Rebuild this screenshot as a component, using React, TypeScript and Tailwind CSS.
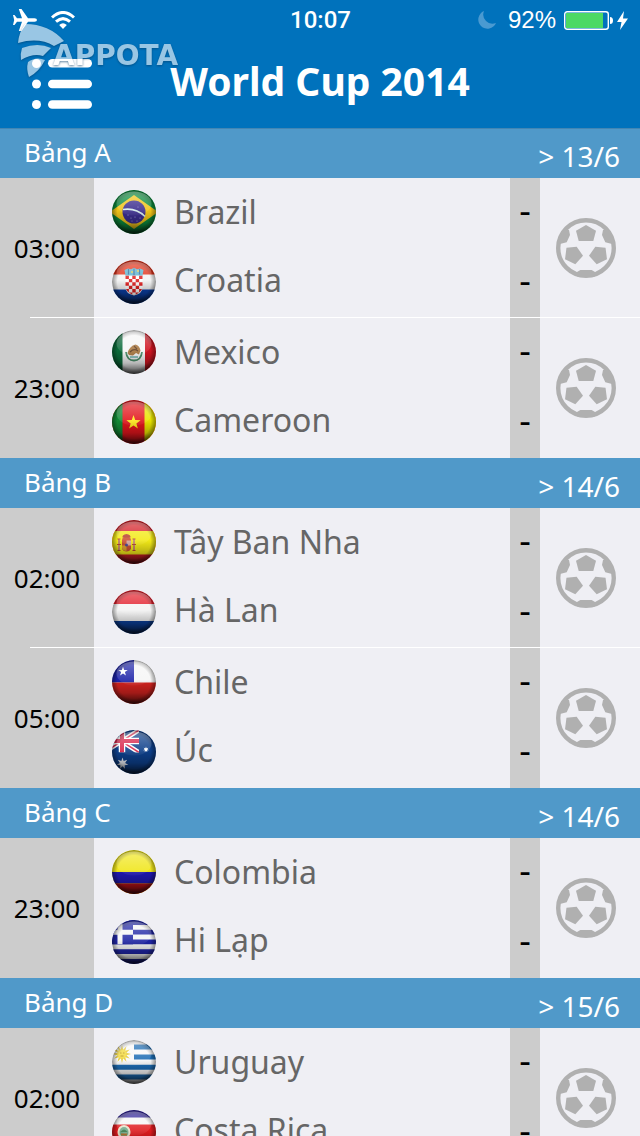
import type { ReactNode } from 'react'

interface Team {
  name: string
  flag: ReactNode
}

interface Match {
  time: string
  teams: Team[]
}

interface Group {
  name: string
  date: string
  matches: Match[]
}

function starPoints(cx: number, cy: number, outer: number, inner: number, tips = 5) {
  return Array.from({ length: tips * 2 }, (_, i) => {
    const r = i % 2 ? inner : outer
    const angle = (Math.PI * i) / tips - Math.PI / 2
    return `${(cx + r * Math.cos(angle)).toFixed(2)},${(cy + r * Math.sin(angle)).toFixed(2)}`
  }).join(' ')
}

const brazil = (
  <>
    <rect width="44" height="44" fill="#0c8a3c" />
    <path d="M22 5 46 22 22 39 -2 22Z" fill="#f0c419" />
    <circle cx="22" cy="22" r="11.5" fill="#3b2d8e" />
    <path d="M11 19.5q13-2 22 7" fill="none" stroke="#d5ecec" strokeWidth="1.6" />
    <g fill="#a9a4dc">
      <circle cx="16" cy="25" r=".6" />
      <circle cx="19" cy="28" r=".6" />
      <circle cx="23" cy="27" r=".6" />
      <circle cx="25" cy="31" r=".6" />
      <circle cx="20" cy="31" r=".5" />
      <circle cx="28" cy="28" r=".6" />
      <circle cx="26" cy="17" r=".5" />
    </g>
  </>
)

const croatia = (
  <>
    <rect width="44" height="44" fill="#f4f4f4" />
    <rect width="44" height="14.5" fill="#e2331b" />
    <rect y="29.5" width="44" height="15" fill="#0a3fa5" />
    <path d="M13.5 15.5h17v12q0 6-8.500 8-8.500-2-8.500-8Z" fill="#fff" />
    <path
      d="M13.500 15.500h3.400v3.400h-3.400zM20.300 15.500h3.400v3.400h-3.400zM27.100 15.500h3.400v3.400h-3.400zM16.900 18.900h3.400v3.400h-3.400zM23.700 18.900h3.400v3.400h-3.400zM13.500 22.300h3.400v3.400h-3.400zM20.300 22.300h3.400v3.400h-3.400zM27.100 22.300h3.400v3.400h-3.400zM16.900 25.700h3.400v3.400h-3.400zM23.700 25.700h3.400v3.400h-3.400zM14 29.100h2.900v3.300q-2.300-1.300-2.900-3.300zM20.300 29.100h3.400v3.400h-3.400zM27.100 29.100h2.900q-.6 2-2.900 3.300zM16.900 32.500h3.400v2.200zM23.700 32.500h3.400l-3.400 2.200z"
      fill="#e02020"
    />
    <path d="m12.500 10 3.500-1.500 3 .8 3-1.500 3 1.500 3-.8 3.500 1.500-1 5.500h-17Z" fill="#5fb3cf" />
    <path d="M16.500 9v5.500M22 8.500V15M27.500 9v5.500" stroke="#2f6c9c" strokeWidth="1.2" />
    <path d="M19 12h2M25 11h2" stroke="#e8cf4a" strokeWidth="1.5" />
  </>
)

const mexico = (
  <>
    <rect width="44" height="44" fill="#f6f6f6" />
    <rect width="10.5" height="44" fill="#0b6b3a" />
    <rect x="33" width="11" height="44" fill="#cf1420" />
    <path d="M14 22q1 8.500 8 8.500t8-8.500" fill="none" stroke="#4b8f6a" strokeWidth="1.8" />
    <path d="M15.500 23q2-7 8-8.500 4 1 5 6l-1.500 4-3-1.500-3 2.500-4-.5Z" fill="#a9773e" />
    <path d="M18 22q4-4 8-1M22 16l3 3" fill="none" stroke="#5e3c1e" strokeWidth="1.2" />
    <path d="M18 27h8" stroke="#6fb3b0" strokeWidth="1.5" />
  </>
)

const cameroon = (
  <>
    <rect width="44" height="44" fill="#e2151c" />
    <rect width="10.5" height="44" fill="#128a35" />
    <rect x="32.5" width="12" height="44" fill="#e8e400" />
    <polygon points={starPoints(21.5, 22.5, 7.5, 3)} fill="#ffea1a" />
  </>
)

const spain = (
  <>
    <rect width="44" height="44" fill="#d41f26" />
    <rect y="11" width="44" height="23.5" fill="#f3ea18" />
    <path d="M10 20.500q0-4 4.500-4t4.500 4v8q-1 3-4.500 3t-4.500-3Z" fill="#cf5334" />
    <path d="M14.500 20.500H19v5h-4.500z" fill="#d8a6a0" />
    <path d="M10 25.500h4.500V31q-4-.5-4.500-3Z" fill="#e0a232" />
    <circle cx="14.5" cy="25" r="1.5" fill="#4a4a9a" />
    <path d="M10.500 17.500q-.5-3 4-3.500 4.500.5 4 3.500Z" fill="#b8402c" />
    <path d="M7 19v11M22 19v11" stroke="#c78a6c" strokeWidth="2" />
    <path d="M5.500 30.500h3M20.500 30.500h3M5.500 19h3M20.500 19h3M5 24.500h4M20 24.500h4" stroke="#b5472f" strokeWidth="1" />
  </>
)

const netherlands = (
  <>
    <rect width="44" height="44" fill="#f4f4f4" />
    <rect width="44" height="14" fill="#e3202c" />
    <rect y="31" width="44" height="13" fill="#0b3f98" />
  </>
)

const chile = (
  <>
    <rect width="44" height="44" fill="#f6f6f6" />
    <rect width="22" height="22.5" fill="#1c22a8" />
    <rect y="22.5" width="44" height="22" fill="#d6231f" />
    <polygon points={starPoints(11, 11.5, 5, 2)} fill="#fff" />
  </>
)

const australia = (
  <>
    <rect width="44" height="44" fill="#0d3f8a" />
    <svg width="27" height="22.5" viewBox="0 0 27 22.5">
      <path d="M-8 0 27 22.500M27 0-8 22.500" stroke="#fff" strokeWidth="4.5" />
      <path d="M-8 0 27 22.500M27 0-8 22.500" stroke="#d8254a" strokeWidth="1.5" />
      <path d="M10 0v22.500M0 11h27" stroke="#fff" strokeWidth="6.5" />
      <path d="M10 0v22.500M0 11h27" stroke="#d8254a" strokeWidth="4" />
    </svg>
    <polygon points={starPoints(10.5, 33.5, 6, 2.7, 7)} fill="#e4e8ef" />
    <polygon points={starPoints(34, 19.5, 3, 1.3, 7)} fill="#fff" />
  </>
)

const colombia = (
  <>
    <rect width="44" height="44" fill="#f0e61c" />
    <rect y="22" width="44" height="11.5" fill="#2018b4" />
    <rect y="33.5" width="44" height="11" fill="#c01218" />
  </>
)

const greece = (
  <>
    <rect width="44" height="44" fill="#f6f6f6" />
    <path d="M0 2.500h44M0 12.200h44M0 21.900h44M0 31.600h44M0 41.500h44" stroke="#1f25a5" strokeWidth="4.8" />
    <rect width="21" height="24.3" fill="#1f25a5" />
    <path d="M8 0v24.300M0 12.200h21" stroke="#f6f6f6" strokeWidth="5" />
  </>
)

const uruguay = (
  <>
    <rect width="44" height="44" fill="#f8f8f8" />
    <path d="M22 7h22M22 17h22M0 27.200h44M0 37h44" stroke="#1c6cb4" strokeWidth="5" />
    <polygon points={starPoints(10, 14, 9, 4.5, 12)} fill="#e6c92a" />
    <circle cx="10" cy="14" r="4.5" fill="#f2d93a" />
    <path d="M8 13h1.500M11 13h1.500M8.500 16h3" stroke="#b8951c" />
  </>
)

const costaRica = (
  <>
    <rect width="44" height="44" fill="#f6f6f6" />
    <rect width="44" height="7.5" fill="#2c1f98" />
    <rect y="14.5" width="44" height="15" fill="#e01b1f" />
    <rect y="36.5" width="44" height="8" fill="#2c1f98" />
    <ellipse cx="12" cy="22" rx="6.5" ry="7" fill="#e6e2c8" />
    <ellipse cx="12" cy="22" rx="4.5" ry="5" fill="#6ea98a" />
    <path d="M8.500 22q3.500-5 7 0Z" fill="#397a4a" />
    <path d="M9 24.500h6" stroke="#b3732f" strokeWidth="2" />
  </>
)

const GROUPS: Group[] = [
  {
    name: 'Bảng A',
    date: '13/6',
    matches: [
      { time: '03:00', teams: [{ name: 'Brazil', flag: brazil }, { name: 'Croatia', flag: croatia }] },
      { time: '23:00', teams: [{ name: 'Mexico', flag: mexico }, { name: 'Cameroon', flag: cameroon }] },
    ],
  },
  {
    name: 'Bảng B',
    date: '14/6',
    matches: [
      { time: '02:00', teams: [{ name: 'Tây Ban Nha', flag: spain }, { name: 'Hà Lan', flag: netherlands }] },
      { time: '05:00', teams: [{ name: 'Chile', flag: chile }, { name: 'Úc', flag: australia }] },
    ],
  },
  {
    name: 'Bảng C',
    date: '14/6',
    matches: [
      { time: '23:00', teams: [{ name: 'Colombia', flag: colombia }, { name: 'Hi Lạp', flag: greece }] },
    ],
  },
  {
    name: 'Bảng D',
    date: '15/6',
    matches: [
      { time: '02:00', teams: [{ name: 'Uruguay', flag: uruguay }, { name: 'Costa Rica', flag: costaRica }] },
    ],
  },
]

// Gradients shared by every flag badge
function GlossDefs() {
  return (
    <svg className="absolute size-0" aria-hidden="true">
      <defs>
        <linearGradient id="gloss-shade" x1="0" y1="0" x2="0" y2="1">
          <stop offset=".45" stopColor="#000" stopOpacity="0" />
          <stop offset=".75" stopColor="#000" stopOpacity=".25" />
          <stop offset="1" stopColor="#000" stopOpacity=".75" />
        </linearGradient>
        <radialGradient id="gloss-edge">
          <stop offset=".75" stopColor="#000" stopOpacity="0" />
          <stop offset="1" stopColor="#000" stopOpacity=".4" />
        </radialGradient>
        <linearGradient id="gloss-light" x1="0" y1="0" x2="0" y2="1">
          <stop offset="0" stopColor="#fff" stopOpacity=".35" />
          <stop offset="1" stopColor="#fff" stopOpacity=".04" />
        </linearGradient>
      </defs>
    </svg>
  )
}

function FlagBadge({ children }: { children: ReactNode }) {
  return (
    <svg viewBox="0 0 44 44" className="size-11 rounded-full" aria-hidden="true">
      {children}
      <rect width="44" height="44" fill="url(#gloss-shade)" />
      <circle cx="22" cy="22" r="22" fill="url(#gloss-edge)" />
      <ellipse cx="22" cy="13.5" rx="17.5" ry="12" fill="url(#gloss-light)" />
    </svg>
  )
}

function BallIcon() {
  return (
    <svg viewBox="0 0 60 60" className="size-15" fill="#b0b0b0" aria-hidden="true">
      <circle cx="30" cy="30" r="27.8" fill="none" stroke="#b0b0b0" strokeWidth="4.4" />
      <path d="M30 7 40 12.700 37.300 23H22.700L20 12.700Z" />
      <path d="M10.500 29.700 20.700 28.700 27 37.700 19.300 46.300 9 41.300Z" />
      <path d="M49.500 29.700 39.300 28.700 33 37.700 40.700 46.300 51 41.300Z" />
      <path d="M8 12 13 12 14 17 10.700 24.300 4 26 4 32 2 32 2 22Z" />
      <path d="M52 12 47 12 46 17 49.300 24.300 56 26 56 32 58 32 58 22Z" />
      <path d="M24.300 52H35.700L39 54V58.500H21V54Z" />
    </svg>
  )
}

function StatusBar() {
  return (
    <div className="grid h-10 grid-cols-3 items-center pr-3 pl-[13px] font-['Liberation_Sans',sans-serif]">
      <div className="flex items-center gap-3.5">
        <svg viewBox="0 0 24 22" className="h-[22px] w-6" fill="#fff" aria-label="Chế độ máy bay">
          <path d="M24 11q0 1.800-2.500 1.800H15L8.500 22H5.800L9 12.800H4L1.500 16H0L1.200 11 0 6h1.500L4 9.200h5L5.800 0h2.700L15 9.200h6.500Q24 9.200 24 11Z" />
        </svg>
        <svg viewBox="0 0 24 18" className="h-[18px] w-6" fill="none" stroke="#fff" strokeWidth="3" aria-label="Wi-Fi">
          <path d="M1 6.500Q12-3.500 23 6.500M5 10.700Q12 4.500 19 10.700" />
          <path d="m8.200 14 3.800 4 3.800-4Q12 10.600 8.200 14Z" fill="#fff" stroke="none" />
        </svg>
      </div>
      <time className="text-center font-['Roboto',sans-serif] text-2xl font-medium">10:07</time>
      <div className="flex items-center justify-end">
        <svg viewBox="0 0 18 18" className="mr-3 size-[18px]" fill="#4a9ad1" aria-hidden="true">
          <path d="M6 0A9.200 9.200 0 1 0 18 12 9.200 9.200 0 0 1 6 0Z" />
        </svg>
        <span className="mr-2 text-2xl">92%</span>
        <svg viewBox="0 0 49 19" className="mr-2 h-[19px] w-[49px]" aria-hidden="true">
          <rect x=".7" y=".7" width="43.6" height="17.6" rx="2.5" fill="none" stroke="#fff" strokeWidth="1.4" />
          <rect x="2" y="2" width="37" height="15" fill="#4cd964" />
          <path d="M46 6q3 0 3 3.500T46 13Z" fill="#fff" />
        </svg>
        <svg viewBox="0 0 11 19" className="-ml-1 h-[19px] w-[11px]" fill="#fff" aria-hidden="true">
          <path d="M7 0 0 11h4.500L3 19l8-11.500H6Z" />
        </svg>
      </div>
    </div>
  )
}

function Watermark() {
  return (
    <div className="pointer-events-none absolute top-6 left-[17px] flex opacity-60 drop-shadow-[0_1px_1px_#003a66]">
      <svg viewBox="0 0 48 54" className="h-[54px] w-12" fill="#fff" aria-hidden="true">
        <path d="M8 0Q32 0 47 17L37 22Q22 13 1 19 2 8 8 0Z" />
        <path d="M5 24Q21 18 34 24L26 32Q16 29 4 36Q3 30 5 24Z" />
        <path d="M11 38Q19 32 28 36 22 48 12 53 9 45 11 38Z" />
      </svg>
      <span className="-ml-3 pt-4 font-['DejaVu_Sans',sans-serif] text-[28px] leading-8 font-bold">APPOTA</span>
    </div>
  )
}

function Header() {
  return (
    <header className="relative z-10 shrink-0 bg-[#0072bc] text-white shadow-[0_1px_0_#4286b4]">
      <StatusBar />
      <div className="grid h-22 grid-cols-[1fr_auto_1fr] items-center px-8">
        <button type="button" aria-label="Menu" className="justify-self-start">
          <svg viewBox="0 0 60 50" className="h-[50px] w-15" fill="#fff">
            <circle cx="4.5" cy="4.5" r="4.5" />
            <circle cx="4.5" cy="25" r="4.5" />
            <circle cx="4.5" cy="45.5" r="4.5" />
            <rect x="16" y="0" width="44" height="8.5" rx="4.25" />
            <rect x="16" y="20.75" width="44" height="8.5" rx="4.25" />
            <rect x="16" y="41.25" width="44" height="8.5" rx="4.25" />
          </svg>
        </button>
        <h1 className="pb-1.5 text-[39px] leading-12 font-bold">World Cup 2014</h1>
      </div>
      <Watermark />
    </header>
  )
}

function MatchRow({ match }: { match: Match }) {
  return (
    <li className="group relative flex h-35 bg-[#efeff4]">
      <time className="flex w-[94px] items-center justify-center bg-[#ccc] text-[26px] text-black">{match.time}</time>
      <div className="flex flex-1">
        <div className="flex flex-col gap-[26px] pt-3 pl-[18px]">
          {match.teams.map((team) => (
            <FlagBadge key={team.name}>{team.flag}</FlagBadge>
          ))}
        </div>
        <div className="pl-[18px] text-[32px] leading-[68px] text-[#666]">
          {match.teams.map((team) => (
            <p key={team.name}>{team.name}</p>
          ))}
        </div>
      </div>
      <div className="flex w-[30px] flex-col gap-1.5 bg-[#ccc] text-center text-4xl leading-16 text-black">
        {match.teams.map((team) => (
          <p key={team.name}>-</p>
        ))}
      </div>
      <button type="button" aria-label="Nhắc trận đấu" className="flex w-[100px] items-center pl-4">
        <BallIcon />
      </button>
      <span className="absolute right-0 bottom-0 left-[30px] h-px bg-white group-last:hidden" />
    </li>
  )
}

function GroupSection({ group }: { group: Group }) {
  return (
    <section>
      <div className="flex h-[50px] items-center justify-between bg-[#5099c9] pr-5 pl-6 text-white">
        <h2 className="pb-0.5 text-[26px]">{group.name}</h2>
        <span className="pt-1.5 text-[28px]">&gt; {group.date}</span>
      </div>
      <ul>
        {group.matches.map((match) => (
          <MatchRow key={match.teams[0].name} match={match} />
        ))}
      </ul>
    </section>
  )
}

export default function App() {
  return (
    <div className="flex h-screen flex-col bg-[#efeff4] font-['Noto_Sans',sans-serif]">
      <GlossDefs />
      <Header />
      <main className="min-h-0 flex-1 overflow-y-auto [scrollbar-width:none]">
        {GROUPS.map((group) => (
          <GroupSection key={group.name} group={group} />
        ))}
      </main>
    </div>
  )
}
